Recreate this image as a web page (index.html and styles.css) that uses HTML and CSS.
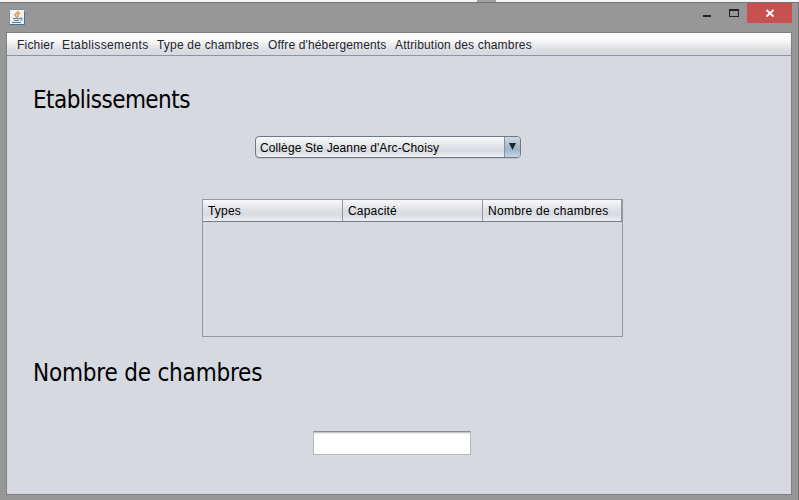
FILE: index.html
```html
<!DOCTYPE html>
<html lang="fr">
<head>
<meta charset="utf-8">
<title>Etablissements</title>
<link rel="stylesheet" href="styles.css">
</head>
<body>
<div class="backdrop"><span class="backdrop-mark"></span></div>
<div class="window">
  <header class="titlebar">
    <svg class="app-icon" width="16" height="16" viewBox="0 0 16 16">
      <rect x=".5" y=".5" width="15" height="15" rx="1" fill="#f0f3f5" stroke="#7892a5"/>
      <path d="M.5 15.5h15V3" fill="none" stroke="#4f728b"/>
      <path d="M9 2c.5 2-3.500 2.500-3 4.500L8 8.500M11 4c-3 1-3 2.500-1.500 4" fill="none" stroke="#e98a35" stroke-width="1.400"/>
      <path d="M4 9.500h7M5 11.500h5M3 13.500h9M11 9h2v1.500L11 11.500" fill="none" stroke="#527a98"/>
    </svg>
    <div class="controls">
      <svg class="ctl" width="44" height="20" viewBox="0 0 44 20" shape-rendering="crispEdges">
        <rect x="0" y="12" width="8" height="2" fill="#222"/>
        <path d="M26 6h10v8H26z M27 8v5h8V8z" fill="#222" fill-rule="evenodd"/>
      </svg>
      <div class="close">
        <svg width="45" height="20" viewBox="0 0 45 20"><path d="M19.500 7l7 6.500M26.500 7l-7 6.500" stroke="#fff" stroke-width="1.800"/></svg>
      </div>
    </div>
  </header>
  <main class="client">
    <nav class="menubar">
      <span class="m1">Fichier</span><span class="m2">Etablissements</span><span class="m3">Type de chambres</span><span class="m4">Offre d'hébergements</span><span class="m5">Attribution des chambres</span>
    </nav>
    <h1 class="heading first">Etablissements</h1>
    <div class="combo">
      <span class="combo-text">Collège Ste Jeanne d'Arc-Choisy</span>
      <span class="combo-button"><svg width="7" height="7" viewBox="0 0 7 7"><path d="M0 0h7L3.500 7z" fill="#1c2226"/></svg></span>
    </div>
    <div class="table">
      <div class="thead">
        <span class="th">Types</span><span class="th">Capacité</span><span class="th last">Nombre de chambres</span>
      </div>
    </div>
    <h2 class="heading second">Nombre de chambres</h2>
    <div class="field"></div>
  </main>
</div>
</body>
</html>
```
FILE: styles.css
```css
* { box-sizing: border-box; }
body {
  margin: 0;
  width: 799px;
  height: 500px;
  overflow: hidden;
  background: #979797;
  font: 12px/16px "Liberation Sans", Arial, sans-serif;
  color: #000;
}
.backdrop { height: 2px; background: #f2f3f4; padding-left: 477px; }
.backdrop-mark { display: block; width: 19px; height: 2px; background: #9fa3a7; }
.window {
  height: 498px;
  border-top: 1px solid #747474;
  border-right: 1px solid #747474;
  background: #979797;
  padding: 0 6px;
}
.titlebar { display: flex; justify-content: space-between; height: 29px; padding-left: 3px; }
.app-icon { margin-top: 6px; }
.controls { display: flex; height: 20px; }
.close { width: 45px; height: 20px; background: #c75050; }
.ctl, .close svg { display: block; }
.client {
  width: 786px;
  height: 463px;
  border: 1px solid #7f7f7f;
  background: #d6d9e0;
}
.menubar {
  display: flex;
  height: 23px;
  padding: 4px 0 0 10px;
  border-bottom: 1px solid #8d939f;
  background: linear-gradient(#fff 0%, #f8f8f8 35%, #d8dbe0 80%, #d6dae1 100%);
  color: #23232d;
  white-space: nowrap;
}
.m1 { width: 45px; letter-spacing: .2px; }
.m2 { width: 95px; letter-spacing: .38px; }
.m3 { width: 111px; letter-spacing: .2px; }
.m4 { width: 127px; letter-spacing: .15px; }
.m5 { letter-spacing: .17px; }
.heading {
  margin: 0 0 0 26px;
  height: 30px;
  font: 24px/30px "DejaVu Sans Condensed", "DejaVu Sans", sans-serif;
  font-stretch: condensed;
  white-space: nowrap;
}
.first { margin-top: 29px; letter-spacing: -.55px; }
.second { margin-top: 21px; letter-spacing: -.2px; }
.combo {
  display: flex;
  justify-content: space-between;
  width: 266px;
  height: 22px;
  margin: 21px 0 0 248px;
  border: 1px solid #6d7785;
  border-radius: 4px;
  box-shadow: 0 1px 0 #c3c8d0;
  background: linear-gradient(#f8f9fa, #dfe2e6 50%, #d8dbe1 70%, #eef1f5);
  overflow: hidden;
}
.combo-text { padding: 3px 0 0 4px; letter-spacing: .11px; }
.combo-button {
  display: flex;
  width: 16px;
  padding: 6px 0 0 4px;
  border-left: 1px solid #7c93a8;
  background: linear-gradient(#cfdae4, #a5b9ca 50%, #a0b6c8 65%, #c5d8e8);
}
.table { width: 421px; height: 138px; margin: 41px 0 0 195px; border: 1px solid #9297a1; }
.thead {
  display: flex;
  height: 22px;
  border-bottom: 1px solid #747a86;
  background: linear-gradient(#f8f8fa, #dfe1e5 45%, #d8dbe0 70%, #eceff5);
}
.th { width: 140px; padding: 3px 0 0 5px; border-right: 1px solid #8f949e; letter-spacing: .2px; white-space: nowrap; }
.last { width: 139px; letter-spacing: .28px; }
.field {
  width: 158px;
  height: 24px;
  margin: 43px 0 0 306px;
  border: 1px solid #b8b9bc;
  border-top-color: #8c8c8f;
  background: linear-gradient(#c8c8ca 1px, #ebebed 1px, #ebebed 2px, #fff 2px);
}
```
